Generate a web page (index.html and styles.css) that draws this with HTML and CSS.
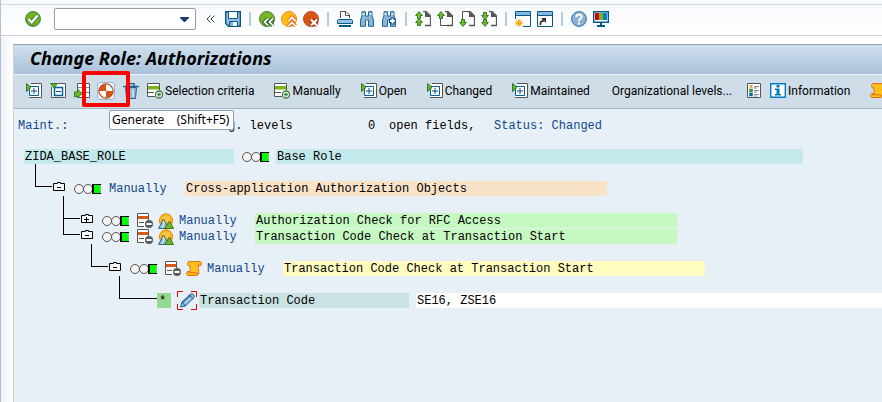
FILE: index.html
```html
<!DOCTYPE html>
<html lang="en">
<head>
<meta charset="utf-8">
<title>Change Role: Authorizations</title>
<link rel="stylesheet" href="styles.css">
</head>
<body>
<svg class="sprite" aria-hidden="true">
  <symbol id="expand" viewBox="0 0 16 16"><path d="M5 .5h10.500v14H3" fill="#fff" stroke="#555"/><path d="M3.500 3.500h9v9h-9z" fill="#fff" stroke="#00629c"/><path d="M8 5v6M5 8h6" stroke="#124a8c"/><path d="M.5.5 5 4.500.5 8.500z" fill="#6fb52c" stroke="#2e7a28"/></symbol>
  <symbol id="collapse" viewBox="0 0 16 16"><path d="M1.500 4v10.500h14V.5H8" fill="#fff" stroke="#555"/><path d="M4.500 4.500h8v8h-8z" fill="#fff" stroke="#00629c" stroke-width="1.500"/><path d="M6 8.500h5" stroke="#124a8c"/><path d="M.5.5h7L4 5z" fill="#6fb52c" stroke="#2e7a28"/></symbol>
  <symbol id="addrow" viewBox="0 0 16 16"><path d="M.5.500h12v13H.5z" fill="#fff"/><path d="M12.500 7V.5H.5v13H8M.5 9.500H7" fill="none" stroke="#555"/><path d="M1 3h11v3.500H1z" fill="#78b51e"/><circle cx="12" cy="11.500" r="3.500" fill="#fff" stroke="#3d7d3f" stroke-width="1.300"/><path d="M12 9.500v4M10 11.500h4" stroke="#3d7d3f" stroke-width="1.300"/></symbol>
  <symbol id="delrow" viewBox="0 0 16 16"><path d="M.5.5h11v13H.5z" fill="#fff"/><path d="M11.500 7V.5H.5v13H7M2 9.500h5" fill="none" stroke="#555"/><path d="M1 3h10v3H1z" fill="#d85a18"/><circle cx="12" cy="11" r="4" fill="#5b5b5b"/><path d="M9.500 11h5" stroke="#fff" stroke-width="2"/></symbol>
  <symbol id="scroll" viewBox="0 0 16 16"><path d="M2.500.6h11.500c2 .6 1.700 3.600 0 4.200h-1.500c-1 2.200.3 3.500.3 5.700.2 2-.6 3.500-2 4H1.500C-.2 13.500 0 11.300 1.500 10.500H4C5 8.500 3.200 6.500 4 4.800H2.500C1.200 3.800 1.200 1.600 2.500.6z" fill="#ffc21c" stroke="#e06b16"/><path d="M12.500 4.500V2.500M2 11.800h8.500l1 1.700" fill="none" stroke="#e06b16"/></symbol>
  <symbol id="hill" viewBox="0 0 16 16"><path d="M1.500 10V6l2.500-4 4-1.500L12 2l2.500 4v4l-6 3z" fill="#ffb414" stroke="#e78a21"/><path d="M4 6a4 3.500 0 0 1 8 0v3H5z" fill="#ffc83a"/><path d="M.5 15.500 5.500 6l5 9.500z" fill="#8db8d6" stroke="#2d6e96"/><path d="m5.500 8 .5 3-2 4" fill="none" stroke="#fff"/><path d="M6.500 15.500 11.500 8l4 7.500z" fill="#6eb42c" stroke="#39781f"/></symbol>
  <symbol id="lights" viewBox="0 0 27 12"><circle cx="5" cy="6" r="4.500" fill="#f4f4f4" stroke="#555"/><circle cx="14" cy="6" r="4.500" fill="#f4f4f4" stroke="#555"/><path d="M18 1h9v10h-9z" fill="#000"/><path d="M20 2h7v8h-7z" fill="#0f0"/><path d="M26.500 2v8" stroke="#7fc57f"/></symbol>
  <symbol id="minus" viewBox="0 0 12 9"><path d="M.5 1.500h4v-1h3v1h4v7H.5z" fill="#f6f8fa" stroke="#000"/><path d="M4 5.500h4" stroke="#000"/></symbol>
  <symbol id="plus" viewBox="0 0 12 9"><path d="M.5 1.500h4v-1h3v1h4v7H.5z" fill="#f6f8fa" stroke="#000"/><path d="M3 5.500h5M5.500 3v5" stroke="#000"/></symbol>
  <symbol id="page" viewBox="0 0 16 16"><path d="M3.500.500H11L15.500 5v9.500h-12z" fill="#fff"/><path d="M8 .5h3L15.500 5v9.500H10" fill="none" stroke="#555" stroke-width="1.300"/><path d="M10 0v6h6z" fill="#555"/></symbol>
  <symbol id="up" viewBox="0 0 8 8"><path d="M4 .6 7.400 4.500H5.500v3h-3v-3H.6z" fill="#78bd20" stroke="#2e7a35"/></symbol>
</svg>

<div class="window">
  <div class="menu-edge"></div>
  <header class="system-bar">
    <button class="tool ok" aria-label="Enter"><svg viewBox="0 0 16 16"><circle cx="8" cy="8" r="7.400" fill="#72b31d" stroke="#397d39"/><path d="m3.500 8 3.200 3.500L12.500 4.500" fill="none" stroke="#397d39" stroke-width="4"/><path d="m3.500 8 3.200 3.500L12.500 4.500" fill="none" stroke="#fff" stroke-width="2.400"/></svg></button>
    <div class="command"><input type="text" aria-label="Command"><button aria-label="Command history"><svg viewBox="0 0 9 5"><path d="M0 0h9v1L5 5H4L0 1z" fill="#1f3a78"/></svg></button></div>
    <button class="tool chevron" aria-label="Hide command field"><svg viewBox="0 0 10 10"><path d="M4.500 1.500 1 5l3.500 3.500M8.500 1.500 5 5l3.500 3.500" fill="none" stroke="#444"/></svg></button>
    <button class="tool" aria-label="Save"><svg viewBox="0 0 16 16"><path d="M.7.7h14.600v14.600H3.500L.7 12.500z" fill="#9cbede" stroke="#005a8c" stroke-width="1.400"/><path d="M3.500 1v6.500h9V1" fill="#fff" stroke="#005a8c"/><path d="M4.500 15v-4.500h8V15" fill="#fff" stroke="#005a8c"/><path d="M5 11h3v4H5z" fill="#84acd1"/></svg></button>
    <i class="sep"></i>
    <button class="tool" aria-label="Back"><svg viewBox="0 0 16 16"><circle cx="8" cy="8" r="7.500" fill="#78b51e" stroke="#43823c"/><path d="M9 7.500 5.500 11 9 14.500M14 7.500 10.500 11l3.500 3.500" fill="none" stroke="#397436" stroke-width="4"/><path d="M9 7.500 5.500 11 9 14.500M14 7.500 10.500 11l3.500 3.500" fill="none" stroke="#fff" stroke-width="1.700"/></svg></button>
    <button class="tool" aria-label="Exit"><svg viewBox="0 0 16 16"><circle cx="8" cy="8" r="7.500" fill="#ffbd16" stroke="#ef8a20"/><path d="m7.500 10 3.500-3.500 3.500 3.500m-7 5 3.500-3.500 3.500 3.500" fill="none" stroke="#e9761b" stroke-width="4"/><path d="m7.500 10 3.500-3.500 3.500 3.500m-7 5 3.500-3.500 3.500 3.500" fill="none" stroke="#fff" stroke-width="1.700"/></svg></button>
    <button class="tool" aria-label="Cancel"><svg viewBox="0 0 16 16"><circle cx="8" cy="8" r="7.500" fill="#d85414" stroke="#b94a18"/><path d="m8 8.500 6 6m0-6-6 6" stroke="#9c2c10" stroke-width="4.500"/><path d="m8 8.500 6 6m0-6-6 6" stroke="#fff" stroke-width="2.200"/></svg></button>
    <i class="sep"></i>
    <button class="tool" aria-label="Print"><svg viewBox="0 0 16 16"><path d="M3.500 7V.5H9L12.500 4v3" fill="#fff" stroke="#555"/><path d="M8.500.5v4h4" fill="none" stroke="#555"/><path d="M1.500 8.500h13l1 1v3H.5v-3z" fill="#9cbede" stroke="#005a8c"/><path d="M2 15h12" stroke="#005a8c" stroke-width="2"/></svg></button>
    <button class="tool" aria-label="Find"><svg viewBox="0 0 16 16"><path d="M3 .7h3.500V5h3V.7H13V5l1.500 4v6.300h-5V9h-3v6.300h-5V9L3 5z" fill="#8bb6d8" stroke="#1a6797"/><path d="M3 3h3m4 0h3" stroke="#fff"/></svg></button>
    <button class="tool" aria-label="Find next"><svg viewBox="0 0 16 16"><path d="M3 .7h3.500V5h3V.7H13V5l1.500 4v6.300h-5V9h-3v6.300h-5V9L3 5z" fill="#8bb6d8" stroke="#1a6797"/><path d="M3 3h3m4 0h3" stroke="#fff"/><path d="M11.500 6.500v7M8 10h7" stroke="#134c88" stroke-width="4"/><path d="M11.500 7.500v5M9 10h5" stroke="#fff" stroke-width="2"/></svg></button>
    <i class="sep"></i>
    <button class="tool" aria-label="First page"><svg viewBox="0 0 16 16"><use href="#page" width="16" height="16"/><use href="#up" width="8" height="8"/><use href="#up" y="7" width="8" height="8"/></svg></button>
    <button class="tool" aria-label="Previous page"><svg viewBox="0 0 16 16"><use href="#page" width="16" height="16"/><path d="M3.500 8v6.500H10" fill="none" stroke="#555"/><use href="#up" width="8" height="8"/></svg></button>
    <button class="tool" aria-label="Next page"><svg viewBox="0 0 16 16"><use href="#page" width="16" height="16"/><path d="M3.500 8V.5H10" fill="none" stroke="#555"/><use href="#up" width="8" height="8" transform="matrix(1 0 0 -1 0 16)"/></svg></button>
    <button class="tool" aria-label="Last page"><svg viewBox="0 0 16 16"><use href="#page" width="16" height="16"/><use href="#up" width="8" height="8" transform="matrix(1 0 0 -1 0 9)"/><use href="#up" width="8" height="8" transform="matrix(1 0 0 -1 0 16)"/></svg></button>
    <i class="sep"></i>
    <button class="tool" aria-label="New session"><svg viewBox="0 0 16 16"><path d="M.5.500h15v15H.5z" fill="#fff"/><path d="M.5 8V.5h15v15H8" fill="none" stroke="#005a8c"/><path d="M1 1h14v3H1z" fill="#8db5d8"/><path d="M1 4.500h14" stroke="#005a8c"/><path d="M4 8v8M0 12h8M1.200 9.200l5.600 5.600m0-5.600-5.600 5.600" stroke="#f39b18"/><circle cx="4" cy="12" r="2.600" fill="#ffad0a"/></svg></button>
    <button class="tool" aria-label="Create shortcut"><svg viewBox="0 0 16 16"><path d="M.5.5h15v15H.5z" fill="#fff" stroke="#005a8c"/><path d="M1 1h14v3H1z" fill="#8db5d8"/><path d="M1 4.500h14" stroke="#005a8c"/><path d="M3.500 14c-.5-3 .5-4 3.500-4.500" fill="none" stroke="#333" stroke-width="1.800"/><path d="M4 7h5v5z" fill="#333"/></svg></button>
    <i class="sep"></i>
    <button class="tool" aria-label="Help"><svg viewBox="0 0 16 16"><circle cx="8" cy="8" r="7.400" fill="#8bb3d7" stroke="#31719f"/><path d="M5.300 6C5.300 2.500 11 2.800 10.700 6 10.500 7.800 8 8 8 10.200M8 11.500v2" fill="none" stroke="#fff" stroke-width="2"/></svg></button>
    <button class="tool" aria-label="Customize layout"><svg viewBox="0 0 16 16"><path d="M.7.7h14.600v10.600H.7z" fill="#fff" stroke="#005a8c" stroke-width="1.400"/><path d="M2 2h4v7H2z" fill="#d90000"/><path d="M6 2h4v7H6z" fill="#79b51e"/><path d="M10 2h4v7h-4z" fill="#0080c6"/><path d="M8 11v3M4 15h8" stroke="#005a8c" stroke-width="2"/></svg></button>
  </header>

  <main class="screen">
    <h1>Change Role: Authorizations</h1>
    <div class="app-bar">
      <button class="tool" aria-label="Expand"><svg><use href="#expand"/></svg></button>
      <button class="tool" aria-label="Collapse"><svg><use href="#collapse"/></svg></button>
      <button class="tool" aria-label="Copy"><svg viewBox="0 0 16 16"><path d="M3.500.5h12v14h-12z" fill="#fff" stroke="#555"/><path d="M4 4.500h11M9.500 1v13M4 9.500h11" stroke="#888"/><path d="M.5 14V9h3V6L8 10.500 3.500 15v-2z" fill="#6fb52c" stroke="#2e7a28"/></svg></button>
      <div class="generate">
        <button aria-label="Generate"><svg viewBox="0 0 16 16"><circle cx="8" cy="8" r="7.200" fill="#d85414" stroke="#b94a18"/><path d="M8 8V1.500A6.500 6.500 0 0 1 14.500 8zM8 8v6.500A6.500 6.500 0 0 1 1.500 8z" fill="#fff"/></svg></button>
        <span class="highlight"></span>
        <span class="tooltip" role="tooltip">Generate&nbsp;&nbsp;&nbsp; (Shift+F5)</span>
      </div>
      <button class="tool" aria-label="Delete"><svg viewBox="0 0 16 16"><path d="M2.500 4.500h11l-1 11h-9z" fill="#8bb6d8" stroke="#1a6797"/><path d="M0 3.500h16M5 3V.500h6V3" fill="none" stroke="#1a6797" stroke-width="1.500"/><path d="M6 6v8m4-8v8" stroke="#fff"/></svg></button>
      <button class="action"><svg><use href="#addrow"/></svg>Selection criteria</button>
      <button class="action"><svg><use href="#addrow"/></svg>Manually</button>
      <button class="action"><svg><use href="#expand"/></svg>Open</button>
      <button class="action"><svg><use href="#expand"/></svg>Changed</button>
      <button class="action"><svg><use href="#expand"/></svg>Maintained</button>
      <button class="action plain">Organizational levels...</button>
      <button class="tool" aria-label="Legend"><svg viewBox="0 0 16 16"><path d="M1.500.5h13v14h-13z" fill="#fff" stroke="#555"/><path d="M8 3.500h5M8 7.500h5M8 11.500h5M8 5h3M8 9h3M8 13h3" stroke="#888"/><path d="m3.500 2 3 3m0-3-3 3" stroke="#b28500"/><path d="M4 6.500h2v2H4z" fill="#fff" stroke="#3c8838" stroke-width="1.500"/><path d="M4 10.500h2v2H4z" fill="#fff" stroke="#00629c" stroke-width="1.500"/></svg></button>
      <button class="action"><svg viewBox="0 0 16 16"><path d="M.7.7h14.600v13.600H.7z" fill="#fff" stroke="#007cc0" stroke-width="1.400"/><path d="M6.500 2h3v2.500h-3zM5 5.500h4.500V11H11v1.500H5V11h1.500V7H5z" fill="#007cc0"/></svg>Information</button>
      <button class="tool" aria-label="Notes"><svg><use href="#scroll"/></svg></button>
    </div>

    <div class="summary">
      <span class="blue">Maint.:</span><span>g. levels</span><span>0</span><span>open fields,</span><span class="blue">Status: Changed</span>
    </div>

    <div class="tree" role="tree">
      <div class="row" role="treeitem"><span class="bar role-name">ZIDA_BASE_ROLE</span><svg class="lights"><use href="#lights"/></svg><span class="bar role-text">Base Role</span></div>
      <div class="row spaced level1" role="treeitem"><i class="elbow"></i><svg class="node"><use href="#minus"/></svg><svg class="lights"><use href="#lights"/></svg><a href="#manual">Manually</a><span class="bar class-text">Cross-application Authorization Objects</span></div>
      <div class="row spaced level2" role="treeitem"><i class="elbow"></i><svg class="node"><use href="#plus"/></svg><svg class="lights"><use href="#lights"/></svg><svg class="pic"><use href="#delrow"/></svg><svg class="pic"><use href="#hill"/></svg><a href="#manual">Manually</a><span class="bar object-text">Authorization Check for RFC Access</span></div>
      <div class="row level2" role="treeitem"><i class="elbow"></i><svg class="node"><use href="#minus"/></svg><svg class="lights"><use href="#lights"/></svg><svg class="pic"><use href="#delrow"/></svg><svg class="pic"><use href="#hill"/></svg><a href="#manual">Manually</a><span class="bar object-text">Transaction Code Check at Transaction Start</span></div>
      <div class="row spaced level3" role="treeitem"><i class="elbow"></i><svg class="node"><use href="#minus"/></svg><svg class="lights"><use href="#lights"/></svg><svg class="pic"><use href="#delrow"/></svg><svg class="pic"><use href="#scroll"/></svg><a href="#manual">Manually</a><span class="bar auth-text">Transaction Code Check at Transaction Start</span></div>
      <div class="row spaced level4" role="treeitem"><i class="elbow long"></i><span class="bar star">*</span><svg class="edit" viewBox="0 0 20 20"><path d="M.5 6V.5H6M14 .5h5.500V6M.5 13v5.500H6M14 18.500h5.500V13" fill="none" stroke="#e00000"/><path d="m3.500 16 1.500-5 8.500-8c2-1 4.500 1 3.500 3.500L8.500 15z" fill="#8bb6d8" stroke="#1a6797"/><path d="m6 11.500 8-7.500M5 11l3.500 4M12 4l4 4" stroke="#245f8a"/><path d="m8 12 6-5.500" stroke="#d9eaf5"/></svg><span class="bar field-name">Transaction Code</span><span class="bar field-value">SE16, ZSE16</span></div>
    </div>
  </main>
</div>
</body>
</html>
```
FILE: styles.css
```css
* { box-sizing: border-box; }

body {
  margin: 0;
  background: #fff;
  color: #000;
  font-family: Roboto, "Noto Sans", sans-serif;
  font-size: 12px;
  overflow: hidden;
}

button {
  padding: 0;
  border: 0;
  background: none;
  color: inherit;
  font: inherit;
  white-space: nowrap;
}

svg { display: block; flex: none; }
.sprite { position: absolute; width: 0; height: 0; }

.window {
  display: flex;
  flex-direction: column;
  min-height: 100vh;
  border-left: 1px solid #b4bfd3;
  background: linear-gradient(90deg, #eff2f8, #fff 12px);
}

.menu-edge {
  height: 5px;
  border-bottom: 1px solid #d3d9e3;
  background: #f8f9fc;
}

.system-bar {
  display: flex;
  align-items: center;
  gap: 6px;
  height: 31px;
  padding: 0 24px 2px;
  border-bottom: 1px solid #c9ced6;
  background: linear-gradient(#f7f9fc, #fff);
}

.tool svg, .action svg { width: 16px; height: 16px; }
.tool { flex: none; }
.ok { margin-right: 7px; }

.command {
  display: flex;
  align-items: center;
  width: 142px;
  height: 22px;
  border: 1px solid #9b9da3;
  border-radius: 2px;
  background: #fff;
}
.command input {
  flex: 1;
  min-width: 0;
  height: 18px;
  border: 0;
  outline: 0;
  background: none;
}
.command button { padding: 0 6px; }
.command svg { width: 9px; height: 5px; }

.chevron { margin: 0 3px 0 4px; }
.chevron svg { width: 10px; height: 10px; }

.sep {
  width: 2px;
  height: 14px;
  margin: 0 2px;
  background: #b4cae2;
}

.screen {
  flex: 1;
  margin: 8px 0 0 12px;
  border-left: 1px solid #cbd3de;
  border-top: 1px solid #8fa7bb;
  background: #e8f0f7;
}

h1 {
  height: 30px;
  margin: 0;
  padding-left: 16px;
  border-bottom: 1px solid #eef4f9;
  background: linear-gradient(#d0e0ed, #a9c1da);
  font-family: "Noto Sans", "Open Sans", sans-serif;
  font-size: 18px;
  font-style: italic;
  line-height: 27px;
}

.app-bar {
  display: flex;
  align-items: center;
  height: 34px;
  padding: 0 0 2px 12px;
  gap: 8px;
  border-bottom: 1px solid #a6b6c6;
  background: #cfdde8;
}
.action {
  display: flex;
  flex: none;
  align-items: center;
  gap: 2px;
  margin-right: 12px;
}
.plain { margin-left: 2px; margin-right: 6px; }

.generate { position: relative; flex: none; margin-left: -1px; }
.generate button {
  display: grid;
  place-items: center;
  width: 18px;
  height: 18px;
  border: 1px solid #a3b3cc;
  border-radius: 3px;
  background: #e8eef6;
}
.generate svg { width: 16px; height: 16px; }
.highlight {
  position: absolute;
  z-index: 2;
  left: -15px;
  top: -11px;
  width: 48px;
  height: 36px;
  border: 4px solid #f00;
  border-radius: 2px;
}
.tooltip {
  position: absolute;
  z-index: 1;
  left: 12px;
  top: 28px;
  width: 125px;
  height: 20px;
  padding-left: 2px;
  border: 1px solid #8f9fba;
  border-radius: 2px;
  background: #fff;
  font-family: "Noto Sans", sans-serif;
  line-height: 17px;
  white-space: nowrap;
}

.summary, .tree {
  font-family: "Liberation Mono", monospace;
  line-height: 16px;
  white-space: nowrap;
}
.summary {
  display: grid;
  grid-template-columns: 210px 140px 21px 105px auto;
  padding: 9px 0 15px 4px;
}
.blue, .tree a { color: #10468c; text-decoration: none; }

.tree { padding-left: 10px; }
.row {
  display: flex;
  align-items: flex-end;
  height: 16px;
}
.spaced { height: 32px; }
.bar, .row a {
  height: 15px;
  margin-bottom: 1px;
  padding-left: 1px;
  line-height: 17px;
}
.role-name { width: 210px; background: #c4e9ec; }
.role-text { width: 527px; background: #c4e9ec; }
.class-text { width: 422px; background: #f8e3c8; }
.object-text { width: 422px; background: #c6f8c2; }
.auth-text { width: 422px; background: #fffcc0; }
.field-name { width: 210px; background: #cbe2e3; }
.field-value { flex: 1; margin-left: 7px; background: #fff; }
.star { width: 14px; padding-left: 2px; background: #93d891; }

.lights { width: 27px; height: 12px; margin: 0 7px 2px 8px; }
.node { width: 12px; height: 9px; margin: 0 1px 6px 1px; }
.pic { width: 16px; height: 16px; margin-right: 5px; }
.lights + .pic { margin-left: 1px; }
.pic + .pic { margin-right: 4px; }
.edit { width: 20px; height: 20px; margin: 0 2px -2px 6px; }
.row a { width: 77px; }

.elbow {
  width: 17px;
  height: 16px;
  margin-bottom: 10px;
  border-left: 1px solid #000;
  border-bottom: 1px solid #000;
}
.spaced .elbow { height: 23px; }
.elbow.long { width: 38px; }
.level1 { padding-left: 11px; }
.level2 { padding-left: 39px; }
.level3 { padding-left: 67px; }
.level4 { padding-left: 95px; }
```
